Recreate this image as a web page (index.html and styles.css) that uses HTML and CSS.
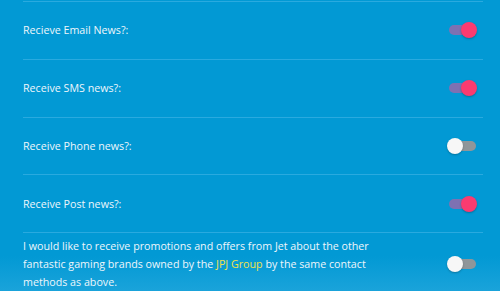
FILE: index.html
```html
<!DOCTYPE html>
<html lang="en">
<head>
<meta charset="UTF-8" />
<title>Contact preferences</title>
<link rel="stylesheet" href="styles.css">
</head>
<body>
<div class="prefs">
	<div class="row">
		<label class="rowlabel" for="email">Recieve Email News?:</label>
		<input type="checkbox" class="switch" id="email" checked />
	</div>
	<div class="row">
		<label class="rowlabel" for="sms">Receive SMS news?:</label>
		<input type="checkbox" class="switch" id="sms" checked />
	</div>
	<div class="row">
		<label class="rowlabel" for="phone">Receive Phone news?:</label>
		<input type="checkbox" class="switch" id="phone" />
	</div>
	<div class="row">
		<label class="rowlabel" for="post">Receive Post news?:</label>
		<input type="checkbox" class="switch" id="post" checked />
	</div>
	<div class="row">
		<label class="rowlabel long" for="brands">I would like to receive promotions and offers from Jet about the other fantastic gaming brands owned by the <a href="#">JPJ Group</a> by the same contact methods as above.</label>
		<input type="checkbox" class="switch" id="brands" />
	</div>
</div>
</body>
</html>
```

FILE: styles.css
```css
* {
	margin: 0;
	padding: 0;
	box-sizing: border-box;
}

html, body {
	height: 100%;
}

body {
	background: #0299d4 linear-gradient(to bottom, #0299d4 88%, #1aa3da 100%);
	font: 10.7px "Open Sans", sans-serif;
	color: #eef6fb;
	overflow: hidden;
}

.prefs {
	width: 460px;
	margin: 1px 0 0 23px;
}

.row {
	display: flex;
	align-items: center;
	justify-content: space-between;
	min-height: 57.75px;
	padding: 4px 6px 4px 0;
	border-top: 1px solid #2aaadf;
}

.rowlabel {
	line-height: 18px;
}

.rowlabel.long {
	max-width: 360px;
}

.rowlabel a {
	color: #f2e24a;
	text-decoration: none;
}

.switch {
	appearance: none;
	position: relative;
	width: 27px;
	height: 10px;
	margin-right: 1px;
	border-radius: 5px;
	background: #8f969a;
	cursor: pointer;
}

.switch::after {
	content: "";
	position: absolute;
	top: -3px;
	left: -2px;
	width: 16px;
	height: 16px;
	border-radius: 50%;
	background: #f7f7f7;
	box-shadow: 0 1px 2px rgba(0, 0, 0, .25);
	transition: left .2s;
}

.switch:checked {
	background: #7e71b2;
}

.switch:checked::after {
	left: 12px;
	background: #fb3b70;
}
```
